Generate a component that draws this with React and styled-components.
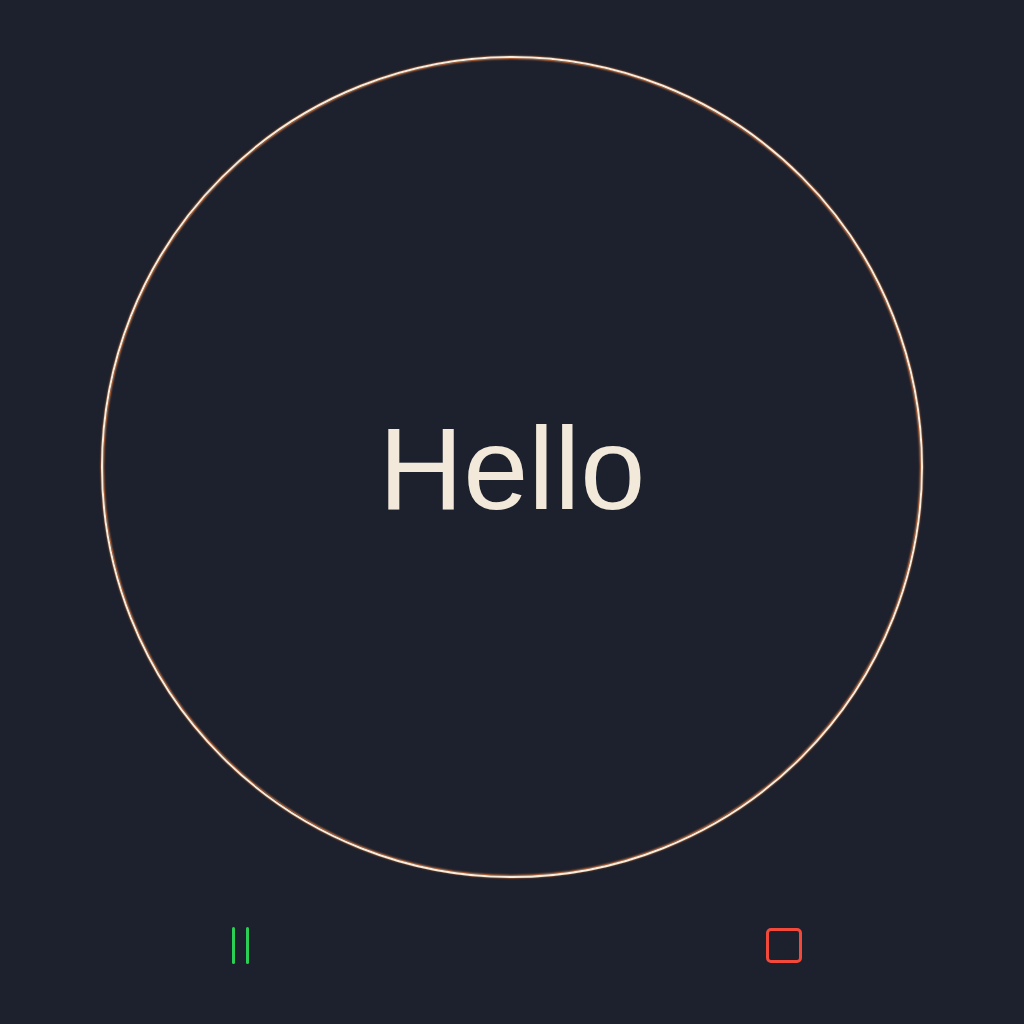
import React from "react";
import styled, { createGlobalStyle } from "styled-components";

const GlobalStyle = createGlobalStyle`
  html, body {
    margin: 0;
    padding: 0;
    background: #1c212d;
  }
  body {
    font-family: "Liberation Sans", Arial, sans-serif;
  }
`;

const Page = styled.div`
  width: 1024px;
  height: 1024px;
  background: #1c212d;
  display: flex;
  flex-direction: column;
  align-items: center;
  padding-top: 56px;
  box-sizing: border-box;
`;

const Ring = styled.div`
  width: 822px;
  height: 822px;
  box-sizing: border-box;
  border-radius: 50%;
  border: 2px solid #f6ecdc;
  box-shadow: inset 0 0 2px 1px #d9733a, 0 0 1.5px 0.5px #b8602f;
  display: flex;
  align-items: center;
  justify-content: center;
`;

const Greeting = styled.div`
  color: #f2e9da;
  font-size: 117px;
  line-height: 1;
  font-weight: 400;
  margin-top: 2px;
`;

const Controls = styled.div`
  width: 582px;
  margin-top: 48px;
  display: flex;
  justify-content: space-between;
  align-items: center;
`;

const ControlButton = styled.button`
  width: 38px;
  height: 38px;
  padding: 0;
  border: none;
  background: transparent;
  display: flex;
  align-items: center;
  justify-content: center;
  cursor: pointer;
`;

const PauseBar = styled.span`
  width: 3px;
  height: 37px;
  border-radius: 2px;
  background: #2ccf55;
  margin: 0 5.5px;
`;

const StopSquare = styled.span`
  width: 36px;
  height: 35px;
  box-sizing: border-box;
  border: 3px solid #f2493b;
  border-radius: 5px;
`;

const App = () => {
  return (
    <Page>
      <GlobalStyle />
      <Ring>
        <Greeting>Hello</Greeting>
      </Ring>
      <Controls>
        <ControlButton aria-label="pause">
          <PauseBar />
          <PauseBar />
        </ControlButton>
        <ControlButton aria-label="stop">
          <StopSquare />
        </ControlButton>
      </Controls>
    </Page>
  );
};

export default App;
